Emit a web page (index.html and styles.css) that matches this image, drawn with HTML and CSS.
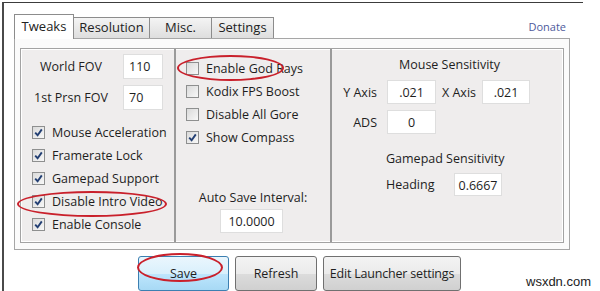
FILE: index.html
```html
<!DOCTYPE html>
<html lang="en">
<head>
  <meta charset="UTF-8">
  <title>Launcher - Tweaks</title>
  <link rel="stylesheet" href="styles.css">
</head>
<body>
  <div class="window">
    <div class="tabbar">
      <div class="tab active">Tweaks</div>
      <div class="tab tab-res">Resolution</div>
      <div class="tab tab-misc">Misc.</div>
      <div class="tab tab-set">Settings</div>
      <a class="donate" href="#">Donate</a>
    </div>

    <div class="panel">
      <div class="group">
        <!-- left column -->
        <div class="col col-left">
          <div class="fov-row">
            <span class="fov-label">World FOV</span>
            <span class="field fov-field">110</span>
          </div>
          <div class="fov-row">
            <span class="fov-label">1st Prsn FOV</span>
            <span class="field fov-field">70</span>
          </div>
          <div class="checks checks-left">
            <div class="check"><span class="box on"></span>Mouse Acceleration</div>
            <div class="check"><span class="box on"></span>Framerate Lock</div>
            <div class="check"><span class="box on"></span>Gamepad Support</div>
            <div class="check"><span class="box on"></span>Disable Intro Video</div>
            <div class="check"><span class="box on"></span>Enable Console</div>
          </div>
        </div>

        <!-- middle column -->
        <div class="col col-mid">
          <div class="checks">
            <div class="check"><span class="box"></span>Enable God Rays</div>
            <div class="check"><span class="box"></span>Kodix FPS Boost</div>
            <div class="check"><span class="box"></span>Disable All Gore</div>
            <div class="check"><span class="box on"></span>Show Compass</div>
          </div>
          <div class="autosave">
            <div class="autosave-label">Auto Save Interval:</div>
            <span class="field autosave-field">10.0000</span>
          </div>
        </div>

        <!-- right column -->
        <div class="col col-right">
          <div class="heading">Mouse Sensitivity</div>
          <div class="sens-row">
            <span class="sens-label">Y Axis</span>
            <span class="field sens-field">.021</span>
            <span class="x-label">X Axis</span>
            <span class="field sens-field">.021</span>
          </div>
          <div class="sens-row">
            <span class="sens-label">ADS</span>
            <span class="field sens-field">0</span>
          </div>
          <div class="heading pad-heading">Gamepad Sensitivity</div>
          <div class="pad-row">
            <span class="pad-label">Heading</span>
            <span class="field pad-field">0.6667</span>
          </div>
        </div>
      </div>
    </div>

    <div class="buttons">
      <button class="btn btn-save">Save</button>
      <button class="btn btn-refresh">Refresh</button>
      <button class="btn btn-edit">Edit Launcher settings</button>
    </div>
  </div>

  <!-- red annotation rings -->
  <div class="ring ring-rays"></div>
  <div class="ring ring-intro"></div>
  <div class="ring ring-save"></div>

  <div class="watermark">wsxdn.com</div>
</body>
</html>
```

FILE: styles.css
```css
body {
  margin: 0;
  width: 600px;
  height: 291px;
  overflow: hidden;
  position: relative;
  background: #fff;
  font-family: "Open Sans", "Noto Sans", sans-serif;
  font-size: 12px;
  color: #1e1e1e;
}
.window {
  margin: 2px 0 0 2px;
  width: 581px;
  height: 289px;
  box-sizing: border-box;
  border-top: 1px solid #3c3c3c;
  border-left: 2px solid #4a4a4a;
  padding: 11px 0 0 10px;
}

/* tabs */
.tabbar {
  display: flex;
  align-items: flex-end;
  width: 556px;
  height: 24px;
  position: relative;
  z-index: 1;
}
.tab {
  box-sizing: border-box;
  height: 21px;
  border: 1px solid #8c8c8c;
  border-bottom: none;
  border-left: none;
  background: linear-gradient(#f4f4f4, #dedede);
  text-align: center;
  line-height: 19px;
  font-size: 13px;
  color: #222;
}
.tab.active {
  height: 25px;
  margin-bottom: -1px;
  border-left: 1px solid #8c8c8c;
  background: #fff;
  line-height: 22px;
  width: 60px;
}
.tab-res { width: 76px; }
.tab-misc { width: 62px; }
.tab-set { width: 62px; }
.donate {
  margin-left: auto;
  margin-right: 4px;
  align-self: center;
  font-size: 11px;
  color: #4e5a9c;
  text-decoration: none;
}

/* tab page */
.panel {
  width: 556px;
  height: 212px;
  box-sizing: border-box;
  border: 1px solid #a6a6a6;
  background: #fbfbfb;
  padding: 9px 5px 0 5px;
}
.group {
  display: grid;
  grid-template-columns: 155px 156px 1fr;
  height: 195px;
  box-sizing: border-box;
  border: 1px solid #a3a3a3;
  box-shadow: inset 0 0 0 1px #fff;
  background: #efeded;
}
.col {
  border-right: 2px solid #9a9a9a;
}
.col-right {
  border-right: none;
}

/* inputs */
.field {
  display: inline-block;
  box-sizing: border-box;
  height: 25px;
  line-height: 23px;
  border: 1px solid #dedede;
  background: #fff;
  text-align: center;
  font-size: 12.5px;
}

/* left column */
.col-left {
  padding-top: 5px;
}
.fov-row {
  display: flex;
  align-items: center;
  height: 25px;
  margin-bottom: 6px;
}
.fov-label {
  width: 100px;
  text-align: center;
  font-size: 12.5px;
}
.fov-field {
  width: 40px;
  margin-left: 2px;
  text-align: left;
  padding-left: 5px;
}

/* checkbox rows */
.checks {
  display: flex;
  flex-direction: column;
  padding-left: 10px;
}
.checks-left {
  margin-top: 11px;
  padding-left: 11px;
}
.col-mid .checks {
  padding-top: 8px;
}
.check {
  display: flex;
  align-items: center;
  height: 23px;
  font-size: 12.5px;
}
.box {
  width: 13px;
  height: 13px;
  box-sizing: border-box;
  border: 1px solid #8e8f8f;
  background: linear-gradient(135deg, #dadada, #f8f8f8);
  margin-right: 7px;
  flex: none;
}
.box.on {
  background: url("data:image/svg+xml,%3Csvg xmlns='http://www.w3.org/2000/svg' width='11' height='11'%3E%3Cpath d='M2.2 5.6 L4.6 8.2 L8.8 2.4' fill='none' stroke='%23233f73' stroke-width='1.9'/%3E%3C/svg%3E") center no-repeat, linear-gradient(135deg, #dadada, #f8f8f8);
}

/* middle column */
.autosave {
  margin-top: 40px;
  display: flex;
  flex-direction: column;
  align-items: center;
}
.autosave-label {
  font-size: 12.5px;
  line-height: 18px;
  margin-bottom: 2px;
}
.autosave-field {
  width: 63px;
  height: 24px;
  margin-right: 3px;
}

/* right column */
.col-right {
  padding: 7px 0 0 10px;
}
.heading {
  text-align: center;
  font-size: 12.5px;
  line-height: 18px;
  padding-right: 6px;
}
.sens-row {
  display: flex;
  align-items: center;
  height: 24px;
  margin-top: 6px;
}
.sens-row:first-of-type {
  margin-top: 5px;
}
.sens-label {
  width: 35px;
  text-align: right;
  font-size: 12.5px;
}
.sens-field {
  width: 49px;
  height: 24px;
  margin-left: 10px;
}
.x-label {
  margin-left: 6px;
  width: 35px;
  font-size: 12.5px;
}
.sens-row .sens-field + .x-label + .sens-field {
  margin-left: 5px;
  width: 48px;
}
.pad-heading {
  text-align: left;
  padding-left: 44px;
  margin-top: 16px;
}
.pad-row {
  display: flex;
  align-items: center;
  margin-top: 5px;
  padding-left: 44px;
}
.pad-label {
  width: 68px;
  font-size: 12.5px;
}
.pad-field {
  width: 48px;
  height: 23px;
}

/* bottom buttons */
.buttons {
  display: flex;
  gap: 6px;
  margin: 6px 0 0 124px;
}
.btn {
  height: 35px;
  box-sizing: border-box;
  border: 1px solid #707070;
  border-radius: 3px;
  background: linear-gradient(#f3f3f3 0%, #ebebeb 50%, #dcdcdc 51%, #d0d0d0 100%);
  font-family: "Open Sans", "Noto Sans", sans-serif;
  font-size: 12.5px;
  color: #1e1e1e;
  padding: 0;
  white-space: nowrap;
}
.btn-save {
  width: 91px;
  border-color: #3c7fb1;
  background: linear-gradient(#eaf6fd 0%, #d9f0fc 50%, #bee6fd 51%, #a7d9f5 100%);
}
.btn-refresh { width: 82px; }
.btn-edit {
  width: 138px;
  letter-spacing: -0.2px;
}

/* annotation rings */
.ring {
  position: absolute;
  border: 2px solid #c9202b;
  border-radius: 50%;
  box-sizing: border-box;
}
.ring-rays {
  left: 177px;
  top: 55px;
  width: 107px;
  height: 26px;
}
.ring-intro {
  left: 17px;
  top: 191px;
  width: 150px;
  height: 26px;
}
.ring-save {
  left: 137px;
  top: 253px;
  width: 86px;
  height: 29px;
}

.watermark {
  position: absolute;
  left: 526px;
  top: 274px;
  font-family: "Liberation Sans", Arial, sans-serif;
  font-size: 13px;
  color: #222;
}
```
